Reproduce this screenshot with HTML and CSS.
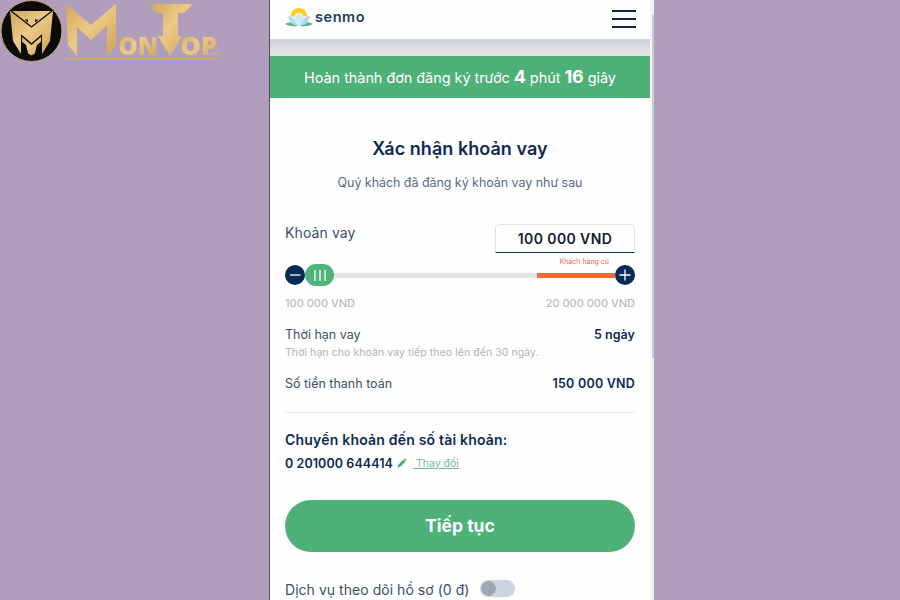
FILE: index.html
```
<!DOCTYPE html>
<html lang="vi">
<head>
<meta charset="utf-8">
<title>Senmo</title>
<link rel="stylesheet" href="styles.css">
</head>
<body>
<svg class="brand" width="225" height="66" viewBox="0 0 225 66" role="img" aria-label="MonTop">
  <defs>
    <linearGradient id="gold" x1="0" y1="0" x2="1" y2="1">
      <stop offset="0" stop-color="#d0a55c"/><stop offset=".45" stop-color="#eccb86"/><stop offset="1" stop-color="#cda056"/>
    </linearGradient>
  </defs>
  <circle cx="31.500" cy="31" r="30.500" fill="#0b0b0b" stroke="#c9a768" stroke-width="1"/>
  <path d="M10 11H53L50 41L42 54V35L31.500 44L21 35V54L13 41Z" fill="url(#gold)"/>
  <path d="M11 11L31.500 27L52 11" fill="none" stroke="#0b0b0b" stroke-width="1.300"/>
  <path d="M24.500 19.500H28V22.500ZM38.500 19.500H35V22.500Z" fill="#0b0b0b"/>
  <path d="M22 36.500L31.500 45L41 36.500V52H37.500L31.500 55.500L25.500 52H22Z" fill="url(#gold)"/>
  <path d="M21 35L31.500 44L42 35" fill="none" stroke="#0b0b0b" stroke-width="1.300"/>
  <path d="M21 41L26 45L28.500 55H21ZM42 41L37 45L34.500 55H42Z" fill="#0b0b0b"/>
  <path d="M66 4L91 25L116 4V45L107 56V26L91 40L77 27V56L68 45Z" fill="url(#gold)"/>
  <path d="M149 4H193L184 13H178V36H182L170 56L158 36H163V13H157Z" fill="url(#gold)"/>
  <text class="brand-text" x="118" y="55" textLength="40" lengthAdjust="spacingAndGlyphs" fill="url(#gold)">ON</text>
  <text class="brand-text" x="180" y="55" textLength="37" lengthAdjust="spacingAndGlyphs" fill="url(#gold)">OP</text>
  <path d="M66 58.700H218" stroke="#d8b167" stroke-width="1.500"/>
  <path d="M211 53.500H218" stroke="#d8b167" stroke-width="2" stroke-dasharray="2 .6"/>
</svg>
<main class="phone">
  <header class="topbar">
    <div class="logo">
      <svg width="28" height="20" viewBox="0 0 28 20">
        <path d="M6 9C6 4 9 1 14 1s8 3 8 8l-4 1a4 4 0 0 0-8 0z" fill="#f9cf2c"/>
        <path d="M0 17q5-3 9-.5l4 2.500q-8 1-13-2zM28 17q-5-3-9-.5l-4 2.500q8 1 13-2z" fill="#5cb583"/>
        <path d="M3 9q7 0 10 9.500Q4 18 3 9zM25 9q-7 0-10 9.500Q24 18 25 9z" fill="#b5daec"/>
        <path d="M14 6q9 7 0 13q-9-6 0-13z" fill="#cfe8f5"/>
      </svg>
      <span class="wordmark">senmo</span>
    </div>
    <div class="burger"><i></i><i></i><i></i></div>
  </header>
  <div class="shade"></div>
  <div class="timer"><span class="t-timer">Hoàn thành đơn đăng ký trước <b>4</b> phút <b>16</b> giây</span></div>
  <section class="content">
    <h1><span class="t-title">Xác nhận khoản vay</span></h1>
    <p class="sub"><span class="t-sub">Quý khách đã đăng ký khoản vay như sau</span></p>
    <div class="amount">
      <span class="t-label">Khoản vay</span>
      <div class="field"><span class="t-field">100 000 VND</span></div>
    </div>
    <div class="note"><span class="t-note">Khách hàng cũ</span></div>
    <div class="slider">
      <svg class="knob" width="20" height="20" viewBox="0 0 20 20"><circle cx="10" cy="10" r="10" fill="#082a57"/><path d="M5 10H15.500" stroke="#fff" stroke-width="1.300"/></svg>
      <div class="thumb"><i></i><i></i><i></i></div>
      <div class="track"></div>
      <div class="track-old"></div>
      <svg class="knob" width="20" height="20" viewBox="0 0 20 20"><circle cx="10" cy="10" r="10" fill="#082a57"/><path d="M4.500 10H15.500M10 4.500V15.500" stroke="#fff" stroke-width="1.300"/></svg>
    </div>
    <div class="limits"><span class="t-min">100 000 VND</span><span class="t-max">20 000 000 VND</span></div>
    <div class="row term"><span class="t-term">Thời hạn vay</span><b class="t-days">5 ngày</b></div>
    <p class="hint"><span class="t-hint">Thời hạn cho khoản vay tiếp theo lên đến 30 ngày.</span></p>
    <div class="row total"><span class="t-pay">Số tiền thanh toán</span><b class="t-sum">150 000 VND</b></div>
    <hr>
    <h2><span class="t-acct">Chuyển khoản đến số tài khoản:</span></h2>
    <div class="account">
      <b class="t-num">0 201000 644414</b>
      <svg width="10" height="10" viewBox="0 0 10 10"><path d="M.5 9.500L1.300 6.700L6.300 1.700L8.300 3.700L3.300 8.700zM6.800 1.200L8 .2L9.700 1.900L8.700 3.200z" fill="#45ad70"/></svg>
      <a class="t-edit">&nbsp;Thay đổi</a>
    </div>
    <div class="button"><span class="t-btn">Tiếp tục</span></div>
    <div class="service"><span class="t-serv">Dịch vụ theo dõi hồ sơ (0 đ)</span><span class="switch"></span></div>
  </section>
  <div class="scroll"></div>
</main>
</body>
</html>
```
FILE: styles.css
```
* { box-sizing: border-box; }
body { margin: 0; width: 900px; height: 600px; overflow: hidden; background: #b19dbc; font-family: Inter, "Open Sans", sans-serif; color: #3b5068; position: relative; }
.brand { position: absolute; left: 0; top: 0; }
.brand-text { font: 800 25px "Open Sans", sans-serif; }
.phone { position: relative; width: 385px; height: 600px; margin-left: 269px; padding-right: 4px; background: #fefefe; border-left: 1px solid #594b62; overflow: hidden; }
.scroll { position: absolute; right: 0; top: 0; width: 4px; height: 600px; background: linear-gradient(#f0f2ef 15px, #cbcbcd 15px, #cbcbcd 358px, #edf0eb 358px); border-left: 2px solid #f5f6f4; }
span, b, a { white-space: nowrap; }
.topbar { height: 39px; display: flex; justify-content: space-between; padding: 7px 14px 0 15px; }
.logo { display: flex; gap: 2px; height: 20px; }
.wordmark { font: 600 14.500px/20px Inter, sans-serif; color: #1b3a60; letter-spacing: .55px; }
.burger { width: 24px; display: flex; flex-direction: column; gap: 6px; padding-top: 3px; }
.burger i { height: 2px; background: #0b2550; }
.shade { height: 17px; background: linear-gradient(#cbd0dc, #e3e2e4 70%, #e4e3e4); }
.timer { height: 42px; background: #4eb177; color: #fff; font-size: 14.500px; line-height: 42px; text-align: center; }
.t-timer { letter-spacing: -.07px; }
.timer b { font-size: 18px; }
.content { padding: 0 15px; }
h1 { margin: 39px 0 0; font-size: 18px; line-height: 24px; text-align: center; color: #0d2b52; font-weight: 600; }
.t-title { letter-spacing: .04px; }
.sub { margin: 12px 0 0; font-size: 12.500px; line-height: 20px; text-align: center; color: #5a6c81; }
.t-sub { letter-spacing: -.05px; }
.amount { display: flex; justify-content: space-between; margin-top: 31px; height: 29px; font-size: 14px; line-height: 18px; }
.t-label { letter-spacing: .1px; }
.field { width: 140px; height: 29px; border: 1px solid #e3e5e9; border-bottom: 1px solid #17345e; border-radius: 5px 5px 0 0; text-align: center; font-weight: 600; color: #111c30; line-height: 27px; }
.t-field { letter-spacing: .4px; }
.note { height: 11px; padding-right: 26px; font-size: 7px; line-height: 18px; text-align: right; color: #ec6b43; }
.slider { display: flex; align-items: center; height: 22px; }
.knob { flex: none; }
.thumb { width: 29px; height: 22px; border-radius: 11px; background: #50b37a; display: flex; gap: 3px; justify-content: center; align-items: center; }
.thumb i { width: 2px; height: 11px; background: #c1e4cf; }
.track { flex: 1; height: 5px; background: #e4e4e4; }
.track-old { width: 78px; height: 5px; background: #ea6c32; }
.limits { display: flex; justify-content: space-between; margin-top: 9px; font-size: 11px; line-height: 16px; font-weight: 500; color: #b9bcc0; }
.row { display: flex; justify-content: space-between; font-size: 12.500px; line-height: 18px; }
.row b, h2, .account b { color: #0d2b52; font-weight: 600; }
.t-sum { letter-spacing: .22px; }
.t-days { letter-spacing: .05px; }
.term { margin-top: 15px; }
.hint { margin: 1px 0 0; font-size: 10.500px; line-height: 16px; color: #afb3b8; }
.t-hint { letter-spacing: .07px; }
.total { margin-top: 14px; }
hr { margin: 19px 0 0; border: 0; height: 1px; background: #e2e4e7; }
h2 { margin: 17px 0 0; font-size: 14px; line-height: 20px; }
.t-acct { letter-spacing: .2px; }
.account { display: flex; align-items: center; margin-top: 4px; height: 18px; font-size: 12.500px; }
.t-num { letter-spacing: .08px; }
.account svg { margin: 0 6px 0 4px; }
.account a { font-size: 10.500px; color: #76ba92; text-decoration: underline; }
.button { margin-top: 28px; height: 52px; border-radius: 26px; background: #4eb177; color: #fff; font-size: 17.500px; line-height: 51px; font-weight: 700; text-align: center; }
.service { display: flex; align-items: center; gap: 11px; margin-top: 28px; height: 18px; font-size: 14px; }
.t-serv { letter-spacing: .04px; }
.switch { width: 35px; height: 17px; margin-bottom: 2px; border-radius: 9px; background: radial-gradient(circle at 8.500px 8.500px, #9fa7b3 7px, #cdd3e0 7.600px); }
```
